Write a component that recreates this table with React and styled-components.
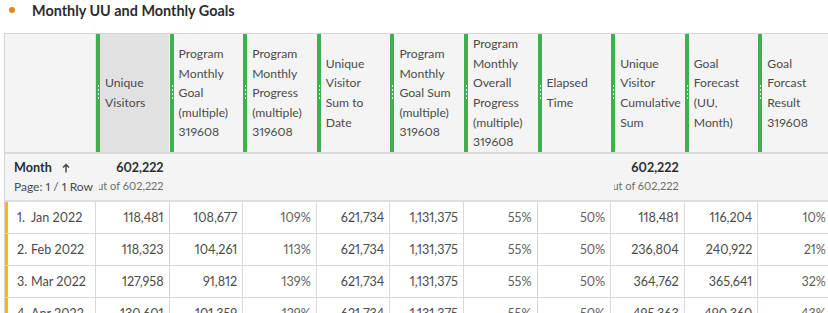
import React from 'react';
import styled, { createGlobalStyle } from 'styled-components';

const GlobalStyle = createGlobalStyle`
  html, body {
    margin: 0;
    padding: 0;
    background: #ffffff;
    overflow: hidden;
  }
  body {
    font-family: Lato, "Noto Sans", sans-serif;
    font-variant-numeric: proportional-nums;
  }
`;

const COLS = '90px repeat(10, 73.6px)';

const columns = [
  { label: ['Unique', 'Visitors'], selected: true },
  { label: ['Program', 'Monthly', 'Goal', '(multiple)', '319608'] },
  { label: ['Program', 'Monthly', 'Progress', '(multiple)', '319608'] },
  { label: ['Unique', 'Visitor', 'Sum to', 'Date'] },
  { label: ['Program', 'Monthly', 'Goal Sum', '(multiple)', '319608'] },
  { label: ['Program', 'Monthly', 'Overall', 'Progress', '(multiple)', '319608'] },
  { label: ['Elapsed', 'Time'] },
  { label: ['Unique', 'Visitor', 'Cumulative', 'Sum'] },
  { label: ['Goal', 'Forecast', '(UU,', 'Month)'] },
  { label: ['Goal', 'Forcast', 'Result', '319608'] },
];

const rows = [
  ['Jan 2022', '118,481', '108,677', '109%', '621,734', '1,131,375', '55%', '50%', '118,481', '116,204', '10%'],
  ['Feb 2022', '118,323', '104,261', '113%', '621,734', '1,131,375', '55%', '50%', '236,804', '240,922', '21%'],
  ['Mar 2022', '127,958', '91,812', '139%', '621,734', '1,131,375', '55%', '50%', '364,762', '365,641', '32%'],
  ['Apr 2022', '130,601', '101,359', '129%', '621,734', '1,131,375', '55%', '50%', '495,363', '490,360', '43%'],
];

const Page = styled.div`
  width: 828px;
  height: 313px;
  overflow: hidden;
`;

const TitleBar = styled.div`
  display: flex;
  align-items: center;
  gap: 17px;
  height: 20px;
  padding: 0 0 13px 9px;
`;

const Dot = styled.span`
  width: 6px;
  height: 6px;
  border-radius: 50%;
  background: #e68619;
`;

const Title = styled.h2`
  margin: 0;
  font-size: 14.4px;
  font-weight: 700;
  color: #2c2c2c;
`;

const Table = styled.div`
  margin-left: 4px;
  width: 840px;
  border-left: 1px solid #d3d3d3;
  border-top: 1px solid #d6d6d6;
`;

const Row = styled.div`
  display: grid;
  grid-template-columns: ${COLS};
`;

const HeaderRow = styled(Row)`
  height: 118px;
  background: #f4f4f4;
  border-bottom: 2px solid #dadada;
`;

const HeaderCell = styled.div`
  position: relative;
  display: flex;
  align-items: center;
  padding: 0 2px 0 10px;
  background: ${(p) => (p.$selected ? '#e1e1e1' : '#f4f4f4')};
  font-size: 12.2px;
  line-height: 19.6px;
  color: #4b4b4b;
  white-space: nowrap;

  &::before {
    content: '';
    position: absolute;
    left: 1px;
    top: 0;
    bottom: 0;
    width: 4px;
    background: #3fb04f;
  }

  &::after {
    content: '';
    position: absolute;
    left: 3px;
    top: 51px;
    width: 1px;
    height: 16px;
    background: repeating-linear-gradient(to bottom, rgba(255, 255, 255, 0.85) 0 2px, transparent 2px 4px);
  }
`;

const BlankHeader = styled.div`
  background: #f4f4f4;
`;

const SummaryRow = styled(Row)`
  height: 46px;
  background: #f4f4f4;
  border-bottom: 2px solid #dedede;
`;

const SummaryLabel = styled.div`
  padding: 4px 0 0 9px;
  font-size: 12.6px;
  line-height: 19px;
  color: #2c2c2c;
  white-space: nowrap;
  overflow: hidden;
`;

const SortLine = styled.div`
  display: flex;
  align-items: center;
  gap: 10px;
  font-weight: 700;
`;

const PageInfo = styled.div`
  font-size: 12px;
  color: #4b4b4b;
`;

const Total = styled.div`
  display: flex;
  flex-direction: column;
  align-items: flex-end;
  padding: 5px 5px 0 0;
  white-space: nowrap;
`;

const TotalValue = styled.span`
  font-size: 12.6px;
  line-height: 18px;
  font-weight: 700;
  color: #2c2c2c;
`;

const TotalOfClip = styled.div`
  display: flex;
  justify-content: flex-end;
  width: 65px;
  overflow: hidden;
`;

const TotalOf = styled.span`
  font-size: 11px;
  line-height: 18px;
  color: #6e6e6e;
`;

const DataRow = styled(Row)`
  height: 31px;
  border-bottom: 1px solid #d9d9d9;
`;

const DimCell = styled.div`
  display: flex;
  align-items: center;
  padding-left: 9px;
  border-left: 3px solid #eac100;
  font-size: 12.6px;
  color: #4b4b4b;
  white-space: nowrap;
`;

const RowNum = styled.span`
  width: 14px;
`;

const Cell = styled.div`
  display: flex;
  align-items: center;
  justify-content: flex-end;
  padding-right: 5px;
  border-left: 1px solid #d9d9d9;
  font-size: 12.6px;
  color: ${(p) => (p.$percent ? '#5f5f5f' : '#4b4b4b')};
  white-space: nowrap;
`;

const UpArrow = () => (
  <svg width="8" height="10" viewBox="0 0 8 10" fill="none">
    <path d="M4 9.5V1.5M1 4.5L4 1.5L7 4.5" stroke="#4b4b4b" strokeWidth="1.5" />
  </svg>
);

const App = () => (
  <Page>
    <GlobalStyle />
    <TitleBar>
      <Dot />
      <Title>Monthly UU and Monthly Goals</Title>
    </TitleBar>
    <Table>
      <HeaderRow>
        <BlankHeader />
        {columns.map((col) => (
          <HeaderCell key={col.label.join(' ')} $selected={col.selected}>
            <div>
              {col.label.map((line) => (
                <div key={line}>{line}</div>
              ))}
            </div>
          </HeaderCell>
        ))}
      </HeaderRow>
      <SummaryRow>
        <SummaryLabel>
          <SortLine>
            Month
            <UpArrow />
          </SortLine>
          <PageInfo>Page: 1 / 1 Row</PageInfo>
        </SummaryLabel>
        {columns.map((col, i) => (
          i === 0 || i === 7 ? (
            <Total key={col.label.join(' ')}>
              <TotalValue>602,222</TotalValue>
              <TotalOfClip>
                <TotalOf>out of 602,222</TotalOf>
              </TotalOfClip>
            </Total>
          ) : <div key={col.label.join(' ')} />
        ))}
      </SummaryRow>
      {rows.map((row, i) => (
        <DataRow key={row[0]}>
          <DimCell>
            <RowNum>{`${i + 1}.`}</RowNum>
            {row[0]}
          </DimCell>
          {row.slice(1).map((value, j) => (
            <Cell key={columns[j].label.join(' ')} $percent={value.endsWith('%')}>{value}</Cell>
          ))}
        </DataRow>
      ))}
    </Table>
  </Page>
);

export default App;
